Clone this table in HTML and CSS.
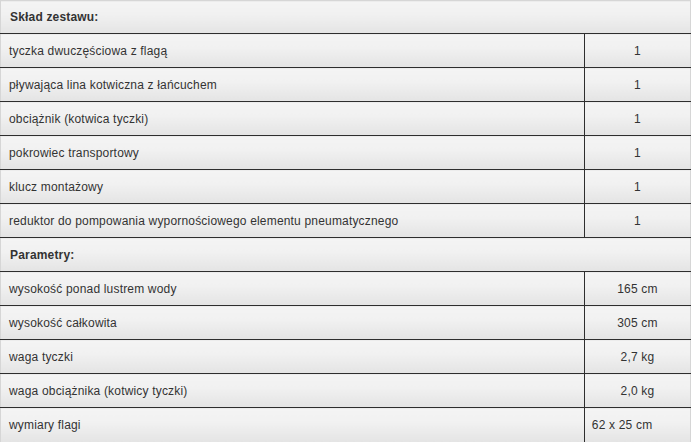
FILE: index.html
```html
<!DOCTYPE html>
<html lang="pl">
<head>
    <meta charset="UTF-8">
    <title>Skład zestawu</title>
    <link rel="stylesheet" href="styles.css">
</head>
<body>
<table class="spec">
    <tr class="section">
        <td colspan="2">Skład zestawu:</td>
    </tr>
    <tr>
        <td class="name">tyczka dwuczęściowa z flagą</td>
        <td class="value">1</td>
    </tr>
    <tr>
        <td class="name">pływająca lina kotwiczna z łańcuchem</td>
        <td class="value">1</td>
    </tr>
    <tr>
        <td class="name">obciążnik (kotwica tyczki)</td>
        <td class="value">1</td>
    </tr>
    <tr>
        <td class="name">pokrowiec transportowy</td>
        <td class="value">1</td>
    </tr>
    <tr>
        <td class="name">klucz montażowy</td>
        <td class="value">1</td>
    </tr>
    <tr>
        <td class="name">reduktor do pompowania wypornościowego elementu pneumatycznego</td>
        <td class="value">1</td>
    </tr>
    <tr class="section">
        <td colspan="2">Parametry:</td>
    </tr>
    <tr>
        <td class="name">wysokość ponad lustrem wody</td>
        <td class="value">165 cm</td>
    </tr>
    <tr>
        <td class="name">wysokość całkowita</td>
        <td class="value">305 cm</td>
    </tr>
    <tr>
        <td class="name">waga tyczki</td>
        <td class="value">2,7 kg</td>
    </tr>
    <tr>
        <td class="name">waga obciążnika (kotwicy tyczki)</td>
        <td class="value">2,0 kg</td>
    </tr>
    <tr>
        <td class="name">wymiary flagi</td>
        <td class="value left">62 x 25 cm</td>
    </tr>
</table>
</body>
</html>
```

FILE: styles.css
```css
body {
    margin: 0;
    background: #fff;
    font-family: "Liberation Sans", Arial, sans-serif;
    font-size: 12px;
    letter-spacing: 0.18px;
    color: #333;
}

.spec {
    width: 691px;
    border-collapse: collapse;
    border: 1px solid #d6d6d6;
    border-bottom: none;
}

.spec td {
    height: 34px;
    padding: 0 0 0 8px;
    box-sizing: border-box;
    background: linear-gradient(#f4f4f4 0%, #f1f1f1 40%, #e4e4e4 100%);
    border-top: 1px solid #2e2e2e;
    vertical-align: middle;
}

.spec tr:first-child td {
    height: 33px;
    border-top: none;
}

.section td {
    font-weight: bold;
    padding-left: 9px;
}

.spec td.name {
    width: 583px;
}

.spec td.value {
    width: 106px;
    padding: 0;
    text-align: center;
    border-left: 1px solid #2e2e2e;
}

.spec td.value.left {
    text-align: left;
    padding-left: 7px;
}
```
